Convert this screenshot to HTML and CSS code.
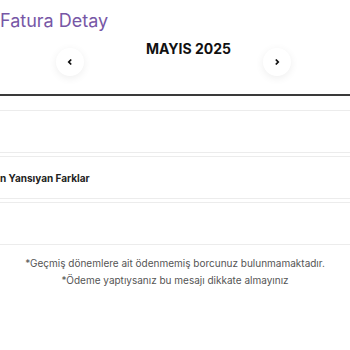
FILE: index.html
```html
<!DOCTYPE html>
<html>
<head>
<meta charset="utf-8">
<link rel="stylesheet" href="styles.css">
</head>
<body>
<div class="page">
  <h1 class="title">Fatura Detay</h1>
  <div class="period">
    <div class="month">MAYIS 2025</div>
    <div class="nav">
      <button class="navbtn"><svg width="8" height="8" viewBox="0 0 8 8"><path d="M5.2 1.5 L2.8 4 L5.2 6.5" fill="none" stroke="#111" stroke-width="1.8"/></svg></button>
      <button class="navbtn"><svg width="8" height="8" viewBox="0 0 8 8"><path d="M2.8 1.5 L5.2 4 L2.8 6.5" fill="none" stroke="#111" stroke-width="1.8"/></svg></button>
    </div>
  </div>
  <div class="tabline"></div>
  <div class="rows">
    <div class="row"></div>
    <div class="row"><span class="rowtext">n Yansıyan Farklar</span></div>
    <div class="row"></div>
  </div>
  <div class="notes">
    <p>*Geçmiş dönemlere ait ödenmemiş borcunuz bulunmamaktadır.</p>
    <p>*Ödeme yaptıysanız bu mesajı dikkate almayınız</p>
  </div>
</div>
</body>
</html>
```
FILE: styles.css
```css
html, body { margin: 0; padding: 0; background: #fff; }
body { font-family: "Inter", "Noto Sans", sans-serif; color: #222; }
.page { width: 350px; overflow: hidden; }
.title {
  margin: 0;
  padding-top: 9px;
  font-size: 18px;
  font-weight: 400;
  color: #7757a6;
  line-height: 24px;
}
.period { display: flex; flex-direction: column; align-items: center; }
.month {
  margin-top: 7px;
  font-size: 14px;
  font-weight: 700;
  color: #111;
  line-height: 18px;
  margin-left: 27px;
}
.nav {
  width: 100%;
  display: flex;
  justify-content: space-between;
  padding: 0 59px 0 56px;
  box-sizing: border-box;
  margin-top: -10px;
}
.navbtn {
  width: 28px; height: 28px;
  border-radius: 50%;
  border: none;
  background: #fff;
  box-shadow: 0 2px 8px rgba(0,0,0,0.07);
  display: flex; align-items: center; justify-content: center;
  padding: 0;
}
.tabline { margin-top: 18px; height: 2px; background: #3a3a3a; }
.rows { margin-top: 14px; display: flex; flex-direction: column; gap: 3px; }
.row {
  height: 41px;
  border-top: 1px solid #ececec;
  border-bottom: 1px solid #ececec;
  display: flex; align-items: center;
}
.rowtext { font-size: 10px; font-weight: 700; color: #222; }
.notes { margin-top: 10px; text-align: center; font-size: 10px; color: #555; }
.notes p { margin: 0; line-height: 17px; }
```
